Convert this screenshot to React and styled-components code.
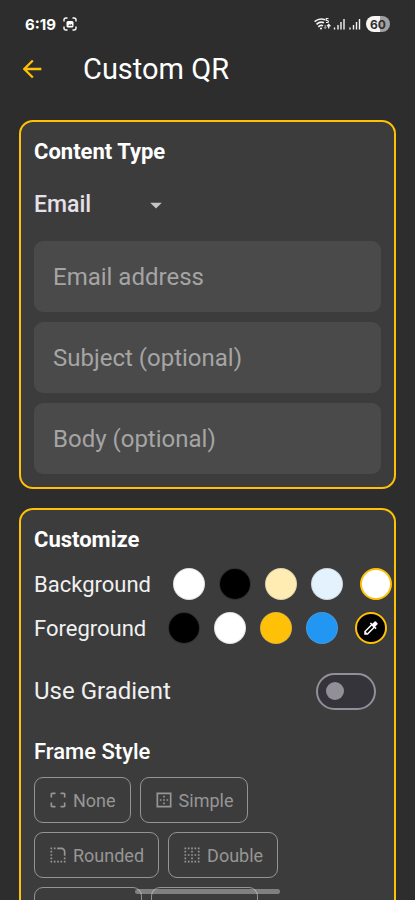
import React, { useState } from 'react';
import styled, { createGlobalStyle } from 'styled-components';
import {
    MdArrowBack,
    MdArrowDropDown,
    MdBorderClear,
    MdBorderOuter,
    MdColorize,
    MdCropFree,
    MdRoundedCorner
} from 'react-icons/md';

const CONTENT_TYPES = ['Email', 'Text', 'URL', 'Phone'];

const FIELDS = [
    { id: 'email', label: 'Email address', type: 'email' },
    { id: 'subject', label: 'Subject (optional)', type: 'text' },
    { id: 'body', label: 'Body (optional)', type: 'text' }
];

const BACKGROUNDS = [
    { name: 'White', value: '#ffffff' },
    { name: 'Black', value: '#000000' },
    { name: 'Cream', value: '#ffecb3' },
    { name: 'Light blue', value: '#e3f2fd' }
];

const FOREGROUNDS = [
    { name: 'Black', value: '#000000' },
    { name: 'White', value: '#ffffff' },
    { name: 'Amber', value: '#ffc107' },
    { name: 'Blue', value: '#2196f3' }
];

const FRAMES = [
    { label: 'None', icon: MdCropFree },
    { label: 'Simple', icon: MdBorderOuter },
    { label: 'Rounded', icon: MdRoundedCorner },
    { label: 'Double', icon: MdBorderClear },
    { label: 'Dotted', icon: MdBorderClear },
    { label: 'Corner', icon: MdBorderOuter }
];

const StatusBar = () => (
    <Status>
        <Clock>6:19</Clock>
        <svg width="14" height="14" viewBox="0 0 14 14" fill="none">
            <path
                d="M1 4.5V3Q1 1 3 1h1.500M9.500 1H11q2 0 2 2v1.500M13 9.500V11q0 2-2 2H9.500M4.500 13H3q-2 0-2-2V9.500"
                stroke="#fff"
                strokeWidth="1.4"
            />
            <rect x="3.500" y="4" width="7" height="6.500" rx="1.500" fill="#fff" />
            <path d="M5 8.700l1.500-1.500 1 .8 1-1.300 1 2z" fill="#2d2d2d" />
        </svg>
        <Spacer />
        <svg width="48" height="14" viewBox="0 0 48 14" fill="none" stroke="#f2f2f2">
            <path d="M.6 4.700Q5.500.6 11 2.800M2.500 7.300Q6 4.100 10 5.700M4.300 9.800Q6.500 7.700 9 8.800" strokeWidth="1.6" />
            <circle cx="7" cy="11.500" r="1.100" fill="#f2f2f2" stroke="none" />
            <path d="M14.500 1.500h-2.300v2h1.200q1 0 1 1t-1 1h-1.400" strokeWidth="1.200" />
            <path d="M14.700 11.500V7.500M13 9.300l1.700-1.800 1.700 1.800" strokeWidth="1.300" />
            <path d="M11.200 8v3.500M10 10.200l1.200 1.300 1.200-1.300" stroke="#b0b0b0" />
            <path
                d="M20.500 12.500v-2M24 12.500V8M27 12.500V5M30 12.500V2M36 12.500v-2M39.500 12.500V8M42.500 12.500V5M45.500 12.500V2"
                strokeWidth="1.400"
            />
        </svg>
        <Battery>60</Battery>
    </Status>
);

const SwatchRow = ({ label, colors, custom, children }) => {
    const [color, setColor] = useState(custom);

    return (
        <ColorRow role="group" aria-label={label}>
            <ColorLabel>{label}</ColorLabel>
            <Swatches>
                {colors.map(c => (
                    <Swatch key={c.name} type="button" aria-label={c.name} $color={c.value} onClick={() => setColor(c.value)} />
                ))}
            </Swatches>
            <Swatch type="button" aria-label={`Custom ${label.toLowerCase()}`} $color={color} $ring>
                {children}
            </Swatch>
        </ColorRow>
    );
};

const App = () => {
    const [type, setType] = useState('Email');
    const [gradient, setGradient] = useState(false);
    const [frame, setFrame] = useState(null);

    return (
        <Screen>
            <GlobalStyle />
            <StatusBar />
            <Header>
                <BackButton type="button" aria-label="Back">
                    <MdArrowBack size={28} />
                </BackButton>
                <Title>Custom QR</Title>
            </Header>
            <Content>
                <Card>
                    <CardTitle id="content-type">Content Type</CardTitle>
                    <SelectWrap>
                        <Select aria-labelledby="content-type" value={type} onChange={e => setType(e.target.value)}>
                            {CONTENT_TYPES.map(t => (
                                <option key={t}>{t}</option>
                            ))}
                        </Select>
                        <MdArrowDropDown size={28} />
                    </SelectWrap>
                    {FIELDS.map(f => (
                        <Input key={f.id} id={f.id} type={f.type} placeholder={f.label} aria-label={f.label} />
                    ))}
                </Card>
                <Card>
                    <CardTitle>Customize</CardTitle>
                    <ColorRows>
                        <SwatchRow label="Background" colors={BACKGROUNDS} custom="#ffffff" />
                        <SwatchRow label="Foreground" colors={FOREGROUNDS} custom="#000000">
                            <MdColorize size={18} />
                        </SwatchRow>
                    </ColorRows>
                    <SwitchRow>
                        <label htmlFor="gradient">Use Gradient</label>
                        <Switch
                            id="gradient"
                            type="checkbox"
                            role="switch"
                            checked={gradient}
                            onChange={e => setGradient(e.target.checked)}
                        />
                    </SwitchRow>
                    <SubTitle>Frame Style</SubTitle>
                    <Chips>
                        {FRAMES.map(({ label, icon: Icon }) => (
                            <Chip key={label} type="button" $active={frame === label} onClick={() => setFrame(label)}>
                                <Icon size={20} />
                                {label}
                            </Chip>
                        ))}
                    </Chips>
                </Card>
            </Content>
            <HomeBar />
        </Screen>
    );
};

export default App;

const GlobalStyle = createGlobalStyle`
    * {
        box-sizing: border-box;
    }

    body {
        margin: 0;
        background: #2d2d2d;
        color: #fff;
        font-family: Roboto, 'Liberation Sans', sans-serif;
    }

    button, input, select {
        margin: 0;
        font-family: inherit;
    }
`;

const Screen = styled.div`
    height: 100vh;
    overflow: hidden auto;
    scrollbar-width: none;
`;

const Status = styled.div`
    display: flex;
    align-items: center;
    height: 48px;
    padding: 0 25px;
`;

const Clock = styled.span`
    margin-right: 7px;
    font-size: 15px;
    font-weight: 700;
    font-family: Inter, Roboto, sans-serif;
`;

const Spacer = styled.span`
    flex: 1;
`;

const Battery = styled.span`
    display: flex;
    align-items: center;
    justify-content: center;
    width: 24px;
    height: 16px;
    margin-left: 4px;
    border-radius: 8px;
    background: linear-gradient(90deg, #f5f5f5 60%, #a0a0a0 60%);
    color: #2d2d2d;
    font-family: Inter, Roboto, sans-serif;
    font-size: 12px;
    font-weight: 700;
`;

const Header = styled.header`
    display: flex;
    align-items: center;
    gap: 37px;
    height: 42px;
    padding: 0 18px;
`;

const BackButton = styled.button`
    display: flex;
    padding: 0;
    border: 0;
    background: none;
    color: #ffc107;
    cursor: pointer;
`;

const Title = styled.h1`
    margin: 0;
    font-size: 29px;
    font-weight: 400;
    line-height: 36px;
`;

const Content = styled.main`
    display: flex;
    flex-direction: column;
    gap: 19px;
    padding: 30px 19px;
`;

const Card = styled.section`
    display: flex;
    flex-direction: column;
    gap: 10px;
    padding: 14px 13px 13px;
    border: 2px solid #ffc107;
    border-radius: 14px;
    background: #3c3c3c;
`;

const CardTitle = styled.h2`
    margin: 0;
    font-size: 22px;
    font-weight: 700;
    line-height: 32px;
`;

const SelectWrap = styled.div`
    display: flex;
    align-items: center;
    height: 53px;
    color: #c4c4c4;

    svg {
        margin-left: -28px;
        pointer-events: none;
    }
`;

const Select = styled.select`
    width: 136px;
    height: 100%;
    padding: 0 28px 0 0;
    border: 0;
    appearance: none;
    background: none;
    color: #e6e0e9;
    font-size: 23px;
    font-weight: 500;
    cursor: pointer;
`;

const Input = styled.input`
    width: 100%;
    height: 71px;
    padding: 0 19px;
    border: 0;
    border-radius: 9px;
    background: #4a4a4a;
    color: #fff;
    font-size: 24px;

    &::placeholder {
        color: #a5a5a5;
        opacity: 1;
    }
`;

const ColorRows = styled.div`
    display: flex;
    flex-direction: column;
    margin-top: -4px;
`;

const ColorRow = styled.div`
    display: flex;
    align-items: center;
    height: 44px;
`;

const ColorLabel = styled.span`
    margin-right: 22px;
    color: #f0f0f0;
    font-size: 22px;
`;

const Swatches = styled.div`
    display: flex;
    flex-shrink: 0;
    gap: 14px;
    margin-right: 17px;
`;

const Swatch = styled.button`
    display: flex;
    flex-shrink: 0;
    align-items: center;
    justify-content: center;
    width: 32px;
    height: 32px;
    padding: 0;
    border: ${({ $ring }) => ($ring ? '2px solid #ffc107' : '1px solid rgba(158, 158, 158, 0.3)')};
    border-radius: 50%;
    background: ${({ $color }) => $color};
    color: #fff;
    cursor: pointer;
`;

const SwitchRow = styled.div`
    display: flex;
    align-items: center;
    justify-content: space-between;
    height: 62px;
    padding-right: 5px;
    color: #f0f0f0;
    font-size: 24px;
`;

const Switch = styled.input`
    display: flex;
    align-items: center;
    width: 60px;
    height: 37px;
    padding: 0 8px;
    border: 2px solid #938f99;
    border-radius: 19px;
    appearance: none;
    background: #36343b;
    cursor: pointer;

    &::before {
        content: '';
        width: 18px;
        height: 18px;
        border-radius: 50%;
        background: #938f99;
    }

    &:checked {
        justify-content: flex-end;
        border-color: #ffc107;
    }

    &:checked::before {
        background: #ffc107;
    }
`;

const SubTitle = styled.h3`
    margin: 5px 0 0;
    font-size: 22px;
    font-weight: 500;
    line-height: 30px;
`;

const Chips = styled.div`
    display: flex;
    flex-wrap: wrap;
    gap: 9px;
`;

const Chip = styled.button`
    display: flex;
    align-items: center;
    gap: 5px;
    height: 46px;
    padding: 0 14px 0 13px;
    border: 1px solid ${({ $active }) => ($active ? '#ffc107' : '#949494')};
    border-radius: 9px;
    background: none;
    color: ${({ $active }) => ($active ? '#ffc107' : '#969696')};
    font-size: 18px;
    cursor: pointer;
`;

const HomeBar = styled.div`
    position: fixed;
    bottom: 6px;
    left: 50%;
    width: 145px;
    height: 5px;
    margin-left: -73px;
    border-radius: 3px;
    background: rgba(255, 255, 255, 0.35);
    pointer-events: none;
`;
